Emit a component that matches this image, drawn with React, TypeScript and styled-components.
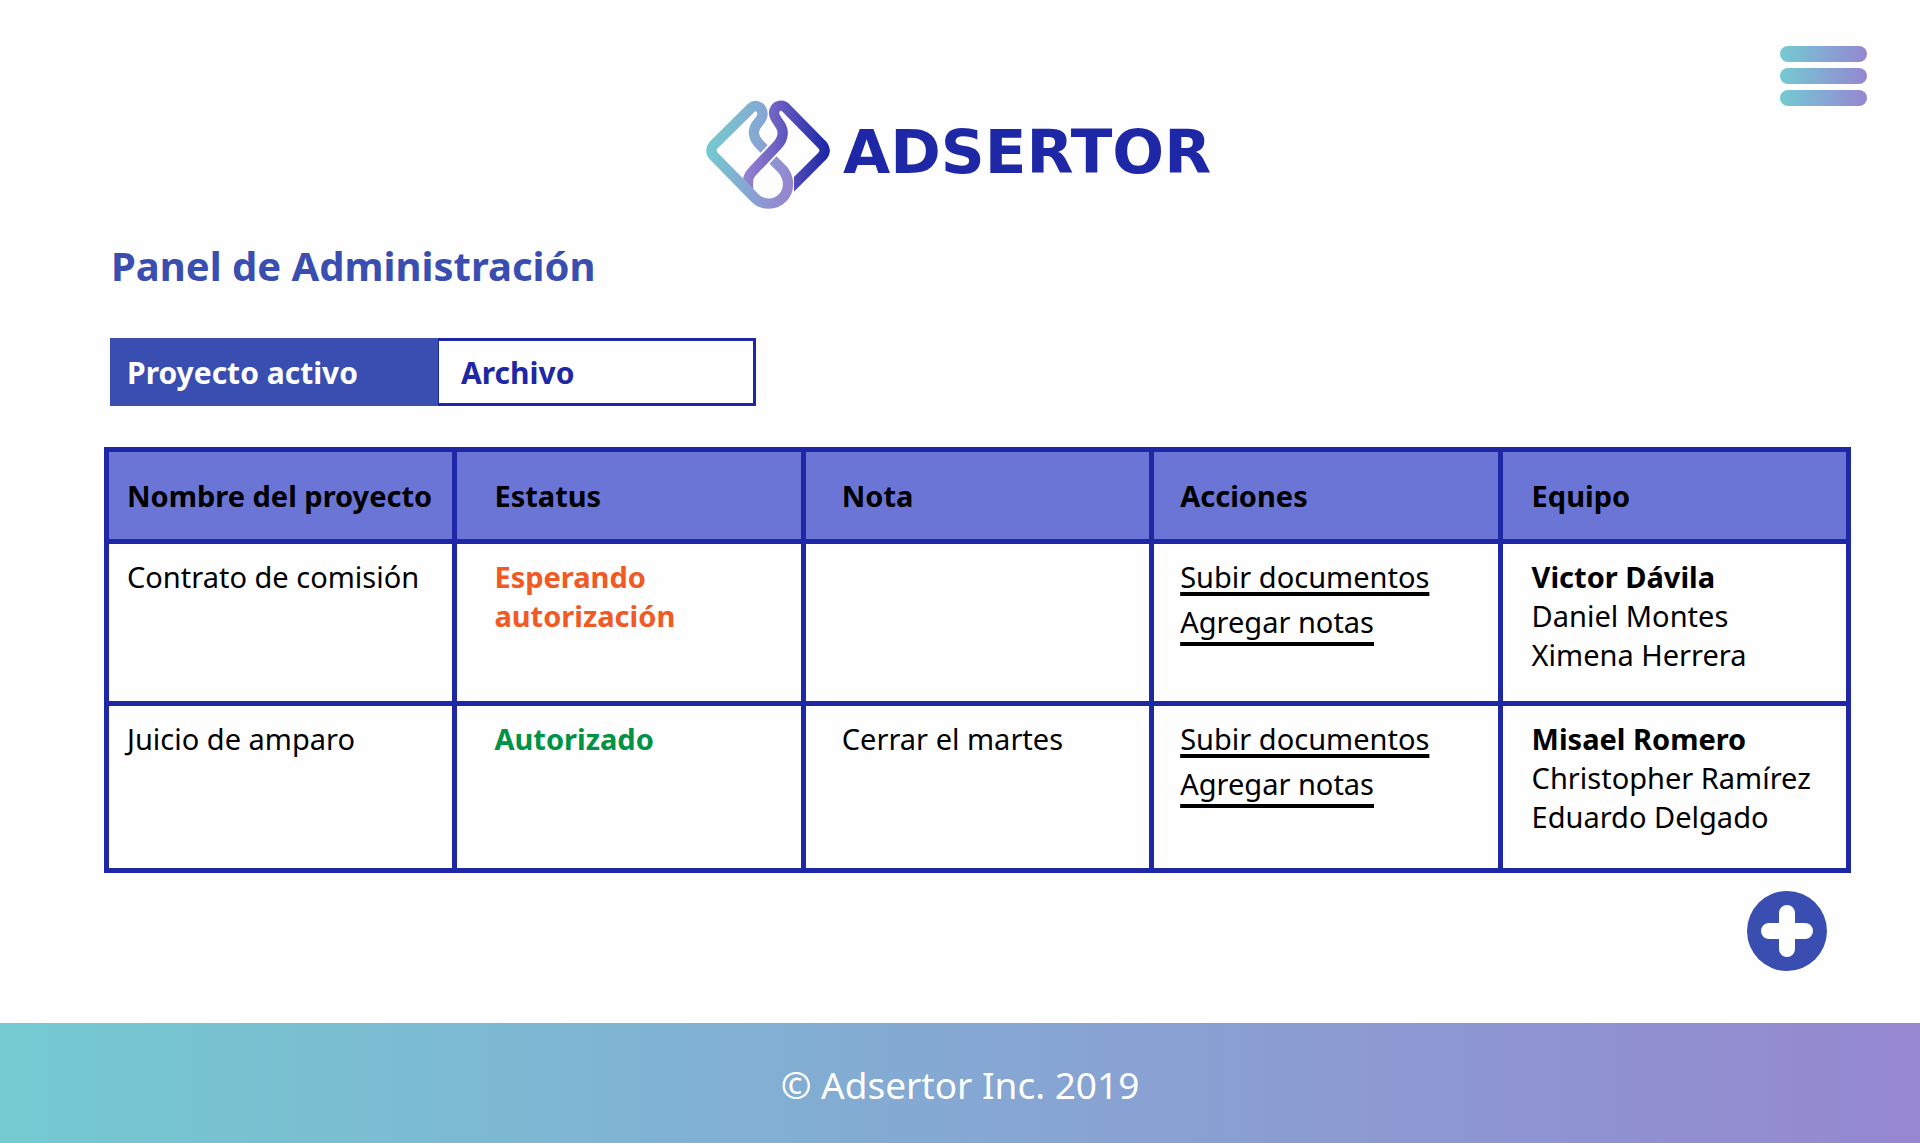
import React from "react";
import styled, { createGlobalStyle } from "styled-components";

const color = {
  navy: "#1e27a6",
  blue: "#394eb0",
  header: "#6a75d6",
  orange: "#f15a24",
  green: "#009245",
  gradient: "linear-gradient(90deg, #74cad1 0%, #85a8d3 50%, #9587d0 100%)",
};

const GlobalStyle = createGlobalStyle`
  *, *::before, *::after { box-sizing: border-box; }
  body {
    margin: 0;
    background: #fefefe;
    color: #000;
    font-family: "Noto Sans", "Open Sans", sans-serif;
    font-size: 29px;
    line-height: 39px;
  }
`;

const Page = styled.div`
  display: flex;
  flex-direction: column;
  min-height: 100vh;
`;

const Header = styled.header`
  display: grid;
  grid-template-columns: 1fr auto 1fr;
  padding: 46px 53px 0;
`;

const Brand = styled.a`
  grid-column: 2;
  display: flex;
  align-items: center;
  gap: 13px;
  margin-top: 54px;
  color: ${color.navy};
  text-decoration: none;
`;

const Wordmark = styled.span`
  min-width: 371px;
  padding-bottom: 6px;
  font-family: "DejaVu Sans", sans-serif;
  font-size: 61px;
  line-height: 64px;
  font-weight: 700;
`;

const MenuButton = styled.button`
  justify-self: end;
  align-self: start;
  display: flex;
  flex-direction: column;
  gap: 6px;
  width: 87px;
  padding: 0;
  border: 0;
  background: none;
  cursor: pointer;
`;

const MenuBar = styled.span`
  height: 16px;
  border-radius: 8px;
  background: ${color.gradient};
`;

const Main = styled.main`
  flex: 1;
  display: flex;
  flex-direction: column;
  padding: 31px 69px 0 104px;
`;

const Title = styled.h1`
  margin: 0;
  padding-left: 7px;
  color: ${color.blue};
  font-size: 40px;
  line-height: 52px;
  font-weight: 700;
`;

const Tabs = styled.nav`
  display: grid;
  grid-template-columns: 328px 318px;
  margin: 46px 0 41px 6px;
`;

const Tab = styled.button<{ $active?: boolean }>`
  height: 68px;
  padding: 0 ${(p) => (p.$active ? 14 : 22)}px;
  border: 3px solid ${(p) => (p.$active ? color.blue : color.navy)};
  border-left-width: ${(p) => (p.$active ? 3 : 1)}px;
  background: ${(p) => (p.$active ? color.blue : "#fff")};
  color: ${(p) => (p.$active ? "#fff" : color.navy)};
  font: inherit;
  font-size: 30px;
  font-weight: 700;
  text-align: left;
  cursor: pointer;
`;

const Table = styled.table`
  width: 100%;
  table-layout: fixed;
  border-collapse: collapse;
  border: 5px solid ${color.navy};
`;

const cellInset = `
  border: 5px solid ${color.navy};
  text-align: left;
  &:nth-child(1) { padding-left: 18px; }
  &:nth-child(2) { padding-left: 37px; }
  &:nth-child(3) { padding-left: 36px; }
  &:nth-child(4) { padding-left: 26px; }
  &:nth-child(5) { padding-left: 29px; }
`;

const HeadCell = styled.th`
  height: 92px;
  padding: 0;
  background: ${color.header};
  font-weight: 700;
  white-space: nowrap;
  ${cellInset}
`;

const Row = styled.tr`
  height: 162px;

  &:last-child {
    height: 167px;
  }
`;

const Cell = styled.td`
  padding: 13px 0 0;
  vertical-align: top;
  ${cellInset}
`;

const Status = styled.strong<{ $tone: "waiting" | "done" }>`
  display: block;
  max-width: 240px;
  color: ${(p) => (p.$tone === "waiting" ? color.orange : color.green)};
`;

const Actions = styled.div`
  display: flex;
  flex-direction: column;
  align-items: flex-start;
  gap: 6px;
`;

const Action = styled.a<{ $drop: number }>`
  color: inherit;
  text-decoration: underline;
  text-decoration-thickness: 4px;
  text-decoration-skip-ink: none;
  text-underline-offset: ${(p) => p.$drop}px;
`;

const Team = styled.ul`
  margin: 0;
  padding: 0;
  list-style: none;
  white-space: nowrap;
`;

const Member = styled.li<{ $lead: boolean }>`
  font-weight: ${(p) => (p.$lead ? 700 : 400)};
`;

const AddButton = styled.button`
  align-self: flex-end;
  width: 80px;
  height: 80px;
  margin: 18px 24px 52px 0;
  padding: 0;
  border: 0;
  border-radius: 50%;
  background: ${color.blue};
  cursor: pointer;
`;

const Footer = styled.footer`
  display: flex;
  align-items: center;
  justify-content: center;
  height: 120px;
  padding-top: 4px;
  background: ${color.gradient};
  color: #fff;
  font-size: 37px;
  line-height: 52px;
`;

function LogoMark() {
  return (
    <svg width="124" height="109" viewBox="48 29 372 327" fill="none" aria-hidden="true">
      <defs>
        <linearGradient id="left" gradientUnits="userSpaceOnUse" x1="48" y1="180" x2="310" y2="240">
          <stop offset="0" stopColor="#74cbcf" />
          <stop offset="0.55" stopColor="#86a6d3" />
          <stop offset="1" stopColor="#9585d0" />
        </linearGradient>
        <linearGradient id="right" gradientUnits="userSpaceOnUse" x1="165" y1="180" x2="410" y2="180">
          <stop offset="0" stopColor="#9583d0" />
          <stop offset="0.4" stopColor="#6a5fc2" />
          <stop offset="1" stopColor="#1e27a6" />
        </linearGradient>
        <clipPath id="ends">
          <path d="M140 0H460V390H312V240H230V336L140 246Z" />
        </clipPath>
      </defs>
      <path
        d="M228 182L205 158C187 138 188 114 205 96C216 85 219 76 217 66C213 46 195 42 183 53L70 165Q58 181 70 196L190 318C215 347 255 347 280 320C300 297 298 262 278 238L236 196"
        stroke="url(#left)"
        strokeWidth="31"
      />
      <path d="M200 230L258 169" stroke="#fefefe" strokeWidth="42" />
      <path
        d="M174 320V276C173 257 182 249 200 230L262 165C282 143 283 118 266 97C254 82 250 72 253 62C258 43 278 42 288 53L398 165Q410 181 398 196L280 314"
        stroke="url(#right)"
        strokeWidth="31"
        clipPath="url(#ends)"
      />
    </svg>
  );
}

function PlusIcon() {
  return (
    <svg width="80" height="80" viewBox="0 0 80 80" aria-hidden="true">
      <path d="M40 22V58M22 40H58" stroke="#fff" strokeWidth="16" strokeLinecap="round" />
    </svg>
  );
}

type Project = {
  name: string;
  status: string;
  tone: "waiting" | "done";
  note: string;
  team: string[];
};

const columns = ["Nombre del proyecto", "Estatus", "Nota", "Acciones", "Equipo"];

const projects: Project[] = [
  {
    name: "Contrato de comisión",
    status: "Esperando autorización",
    tone: "waiting",
    note: "",
    team: ["Victor Dávila", "Daniel Montes", "Ximena Herrera"],
  },
  {
    name: "Juicio de amparo",
    status: "Autorizado",
    tone: "done",
    note: "Cerrar el martes",
    team: ["Misael Romero", "Christopher Ramírez", "Eduardo Delgado"],
  },
];

export default function App() {
  return (
    <Page>
      <GlobalStyle />
      <Header>
        <Brand href="#">
          <LogoMark />
          <Wordmark>ADSERTOR</Wordmark>
        </Brand>
        <MenuButton type="button" aria-label="Menú">
          <MenuBar />
          <MenuBar />
          <MenuBar />
        </MenuButton>
      </Header>
      <Main>
        <Title>Panel de Administración</Title>
        <Tabs>
          <Tab type="button" $active>
            Proyecto activo
          </Tab>
          <Tab type="button">Archivo</Tab>
        </Tabs>
        <Table>
          <thead>
            <tr>
              {columns.map((c) => (
                <HeadCell key={c} scope="col">
                  {c}
                </HeadCell>
              ))}
            </tr>
          </thead>
          <tbody>
            {projects.map((p) => (
              <Row key={p.name}>
                <Cell>{p.name}</Cell>
                <Cell>
                  <Status $tone={p.tone}>{p.status}</Status>
                </Cell>
                <Cell>{p.note}</Cell>
                <Cell>
                  <Actions>
                    <Action href="#" $drop={4}>
                      Subir documentos
                    </Action>
                    <Action href="#" $drop={9}>
                      Agregar notas
                    </Action>
                  </Actions>
                </Cell>
                <Cell>
                  <Team>
                    {p.team.map((m, i) => (
                      <Member key={m} $lead={i === 0}>
                        {m}
                      </Member>
                    ))}
                  </Team>
                </Cell>
              </Row>
            ))}
          </tbody>
        </Table>
        <AddButton type="button" aria-label="Agregar proyecto">
          <PlusIcon />
        </AddButton>
      </Main>
      <Footer>© Adsertor Inc. 2019</Footer>
    </Page>
  );
}
